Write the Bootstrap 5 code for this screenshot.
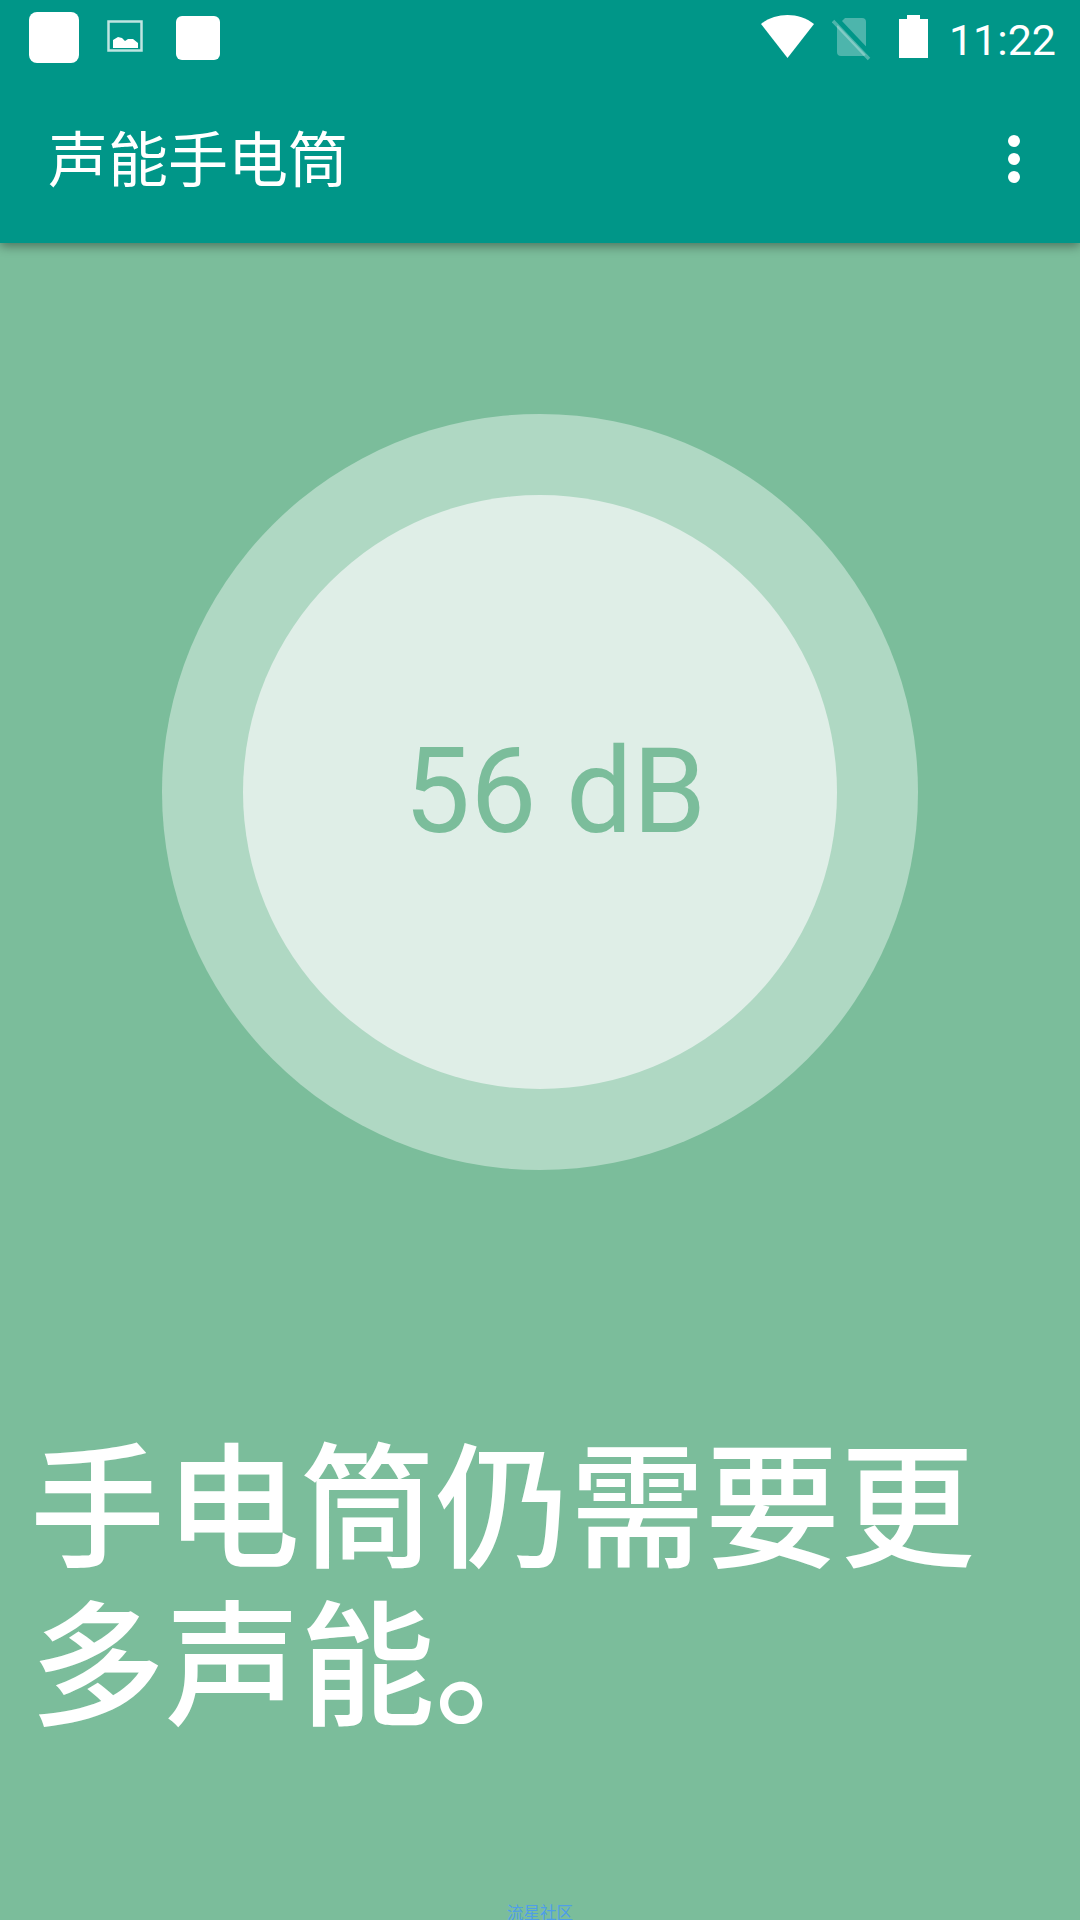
<!DOCTYPE html>
<html lang="zh-CN">

<head>
    <meta charset="UTF-8">
    <meta name="viewport" content="width=device-width, initial-scale=1.0">
    <title>声能手电筒</title>
    <link href="https://cdn.jsdelivr.net/npm/bootstrap@5.3.0/dist/css/bootstrap.min.css" rel="stylesheet">
    <style>
        body {
            background: #7bbd9b;
            font-family: "Roboto", "Noto Sans CJK SC", sans-serif;
            color: #fff;
        }

        .app-screen {
            width: 1080px;
            height: 1920px;
            overflow: hidden;
            position: relative;
        }

        .app-head {
            background: #009688;
            height: 243px;
            box-shadow: 0 3px 10px rgba(0, 0, 0, .4);
            position: relative;
        }

        .status-row {
            height: 72px;
            padding: 12px 24px 0 29px;
        }

        .note-big {
            width: 50px;
            height: 51px;
            background: #fff;
            border-radius: 8px;
        }

        .pic-icon {
            margin: 8px 0 0 28px;
        }

        .note-small {
            width: 44px;
            height: 44px;
            margin: 4px 0 0 33px;
            background: #fff;
            border-radius: 6px;
        }

        .wifi-icon {
            margin: 3px 17px 0 0;
        }

        .sim-icon {
            margin: 5px 27px 0 0;
        }

        .batt-icon {
            margin: 3px 21px 0 0;
        }

        .clock {
            font-size: 43px;
            line-height: 1;
            margin-top: 7px;
        }

        .bar-title {
            height: 171px;
            padding: 0 60px 0 48px;
        }

        .bar-title h1 {
            font-size: 60px;
            font-weight: 400;
            font-family: "Noto Sans CJK SC", sans-serif;
            margin: 0 0 4px;
        }

        .dot {
            width: 12px;
            height: 12px;
            background: #fff;
            border-radius: 50%;
        }

        .dot-col {
            gap: 6px;
            margin-top: 3px;
        }

        .meter-zone {
            padding-top: 171px;
        }

        .meter-outer {
            width: 756px;
            height: 756px;
            background: #afd8c3;
            border-radius: 50%;
        }

        .meter-inner {
            width: 594px;
            height: 594px;
            padding-left: 30px;
            background: #dfeee7;
            border-radius: 50%;
            color: #7bbd9b;
            font-size: 118px;
        }

        .need-text {
            font-family: "Noto Sans CJK SC", sans-serif;
            font-size: 135px;
            font-weight: 500;
            line-height: 158px;
            padding: 0 60px 0 30px;
            margin: 249px 0 0;
        }

        .watermark {
            position: absolute;
            left: 0;
            right: 0;
            bottom: 0;
            text-align: center;
            font-family: "Noto Sans CJK SC", sans-serif;
            font-size: 16.500px;
            line-height: 16px;
            color: #4f9ee8;
        }
    </style>
</head>

<body>
    <div class="app-screen">
        <div class="app-head">
            <div class="status-row d-flex align-items-start">
                <div class="note-big"></div>
                <svg class="pic-icon" width="36" height="32" viewBox="0 0 36 32">
                    <rect x="1.5" y="1.5" width="33" height="29" fill="none" stroke="#fff" stroke-opacity=".75" stroke-width="2.5"/>
                    <path d="M6 28V20l5-3 4 1 3 3 3-2h5l5 4v5z" fill="#fff"/>
                </svg>
                <div class="note-small"></div>
                <div class="ms-auto d-flex align-items-start">
                    <svg class="wifi-icon" width="54" height="44" viewBox="0 0 54 44">
                        <path d="M0 9C15-3 38-3 53 9L26.500 43z" fill="#fff"/>
                    </svg>
                    <svg class="sim-icon" width="40" height="44" viewBox="0 0 40 44">
                        <path d="M13 1h17a4 4 0 0 1 4 4v31a3 3 0 0 1-3 3H9a4 4 0 0 1-4-4V9z" fill="#fff" fill-opacity=".3"/>
                        <path d="M3 1l36 38" stroke="#009688" stroke-width="6"/>
                        <path d="M1 4l36 38" stroke="#fff" stroke-opacity=".3" stroke-width="3.500"/>
                    </svg>
                    <svg class="batt-icon" width="29" height="44" viewBox="0 0 29 44">
                        <path d="M8 0h13v4h8v39H0V4h8z" fill="#fff"/>
                    </svg>
                    <span class="clock">11:22</span>
                </div>
            </div>
            <div class="bar-title d-flex align-items-center justify-content-between">
                <h1>声能手电筒</h1>
                <div class="dot-col d-flex flex-column">
                    <div class="dot"></div>
                    <div class="dot"></div>
                    <div class="dot"></div>
                </div>
            </div>
        </div>

        <div class="meter-zone d-flex justify-content-center">
            <div class="meter-outer d-flex align-items-center justify-content-center">
                <div class="meter-inner d-flex align-items-center justify-content-center">56 dB</div>
            </div>
        </div>

        <p class="need-text">手电筒仍需要更多声能。</p>
        <div class="watermark">流星社区</div>
    </div>

    <script src="https://cdn.jsdelivr.net/npm/bootstrap@5.3.0/dist/js/bootstrap.bundle.min.js"></script>
</body>

</html>
